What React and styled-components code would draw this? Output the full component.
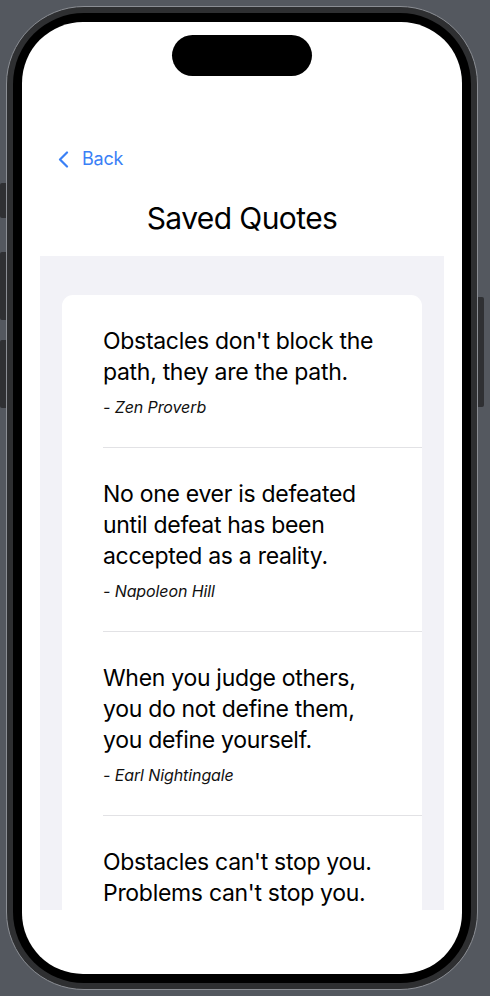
import React from "react";
import styled, { createGlobalStyle } from "styled-components";

const GlobalStyle = createGlobalStyle`
  html, body {
    margin: 0;
    padding: 0;
    background: #54585f;
    font-family: Inter, "Noto Sans", "Liberation Sans", sans-serif;
  }
  * {
    box-sizing: border-box;
  }
`;

const Stage = styled.div`
  width: 490px;
  height: 996px;
  padding: 6px 0 0 6px;
  overflow: hidden;
`;

const Device = styled.div`
  position: relative;
  width: 472px;
  height: 984px;
  padding: 6px;
  border: 1px solid #8b8e94;
  border-radius: 78px;
  background: #2e2f31;
`;

// hardware buttons sticking out of the frame edge
const SideButton = styled.span`
  position: absolute;
  top: ${(p) => p.top}px;
  height: ${(p) => p.h}px;
  width: 6px;
  background: #2f3033;
  ${(p) => (p.right ? "right: -7px; border-radius: 0 2px 2px 0;" : "left: -7px; border-radius: 2px 0 0 2px;")}
`;

const Bezel = styled.div`
  height: 100%;
  padding: 9px;
  border-radius: 71px;
  background: #000;
`;

const Screen = styled.div`
  position: relative;
  height: 100%;
  display: flex;
  flex-direction: column;
  border-radius: 61px;
  background: #fff;
  overflow: hidden;
`;

const Island = styled.div`
  position: absolute;
  top: 13px;
  left: 50%;
  width: 140px;
  height: 41px;
  margin-left: -70px;
  border-radius: 21px;
  background: #000;
`;

const Nav = styled.header`
  display: flex;
  flex-direction: column;
  gap: 30px;
  padding-top: 126px;
`;

const BackLink = styled.a`
  display: inline-flex;
  align-self: flex-start;
  align-items: center;
  gap: 13px;
  margin-left: 36px;
  color: #3a80f6;
  font-size: 18px;
  line-height: 22px;
  letter-spacing: -0.2px;
  text-decoration: none;
  cursor: pointer;
`;

const Title = styled.h1`
  margin: 0;
  text-align: center;
  font-size: 30px;
  line-height: 36px;
  font-weight: 400;
  letter-spacing: -0.6px;
  color: #000;
`;

const ListArea = styled.main`
  flex: 1;
  margin: 20px 18px 64px;
  padding: 39px 22px 0;
  background: #f2f2f7;
  overflow: hidden;
`;

const Card = styled.ul`
  list-style: none;
  margin: 0;
  padding: 0 0 0 41px;
  border-radius: 11px;
  background: #fff;
`;

const Row = styled.li`
  display: flex;
  flex-direction: column;
  gap: 9px;
  padding: 31px 34px 30px 0;
  border-bottom: 1px solid #e2e2e5;
`;

const Quote = styled.p`
  margin: 0;
  font-size: 23px;
  line-height: 31px;
  letter-spacing: -0.3px;
  color: #000;
`;

const Author = styled.p`
  margin: 0;
  font-size: 16px;
  line-height: 20px;
  font-style: italic;
  letter-spacing: -0.1px;
  color: #111;
`;

const quotes = [
  { text: "Obstacles don't block the path, they are the path.", author: "Zen Proverb" },
  { text: "No one ever is defeated until defeat has been accepted as a reality.", author: "Napoleon Hill" },
  { text: "When you judge others, you do not define them, you define yourself.", author: "Earl Nightingale" },
  { text: "Obstacles can't stop you. Problems can't stop you. Most of all, other people can't stop you.", author: "Norman Vincent Peale" },
];

const Chevron = () => (
  <svg width="11" height="17" viewBox="0 0 11 17" fill="none">
    <path d="M9 1.5L2 8.5l7 7" stroke="currentColor" strokeWidth="2.2" strokeLinecap="round" strokeLinejoin="round" />
  </svg>
);

export default function App() {
  return (
    <Stage>
      <GlobalStyle />
      <Device>
        <SideButton top={176} h={35} />
        <SideButton top={245} h={68} />
        <SideButton top={333} h={68} />
        <SideButton right top={290} h={110} />
        <Bezel>
          <Screen>
            <Island />
            <Nav>
              <BackLink>
                <Chevron />
                Back
              </BackLink>
              <Title>Saved Quotes</Title>
            </Nav>
            <ListArea>
              <Card>
                {quotes.map((q) => (
                  <Row key={q.text}>
                    <Quote>{q.text}</Quote>
                    <Author>- {q.author}</Author>
                  </Row>
                ))}
              </Card>
            </ListArea>
          </Screen>
        </Bezel>
      </Device>
    </Stage>
  );
}
